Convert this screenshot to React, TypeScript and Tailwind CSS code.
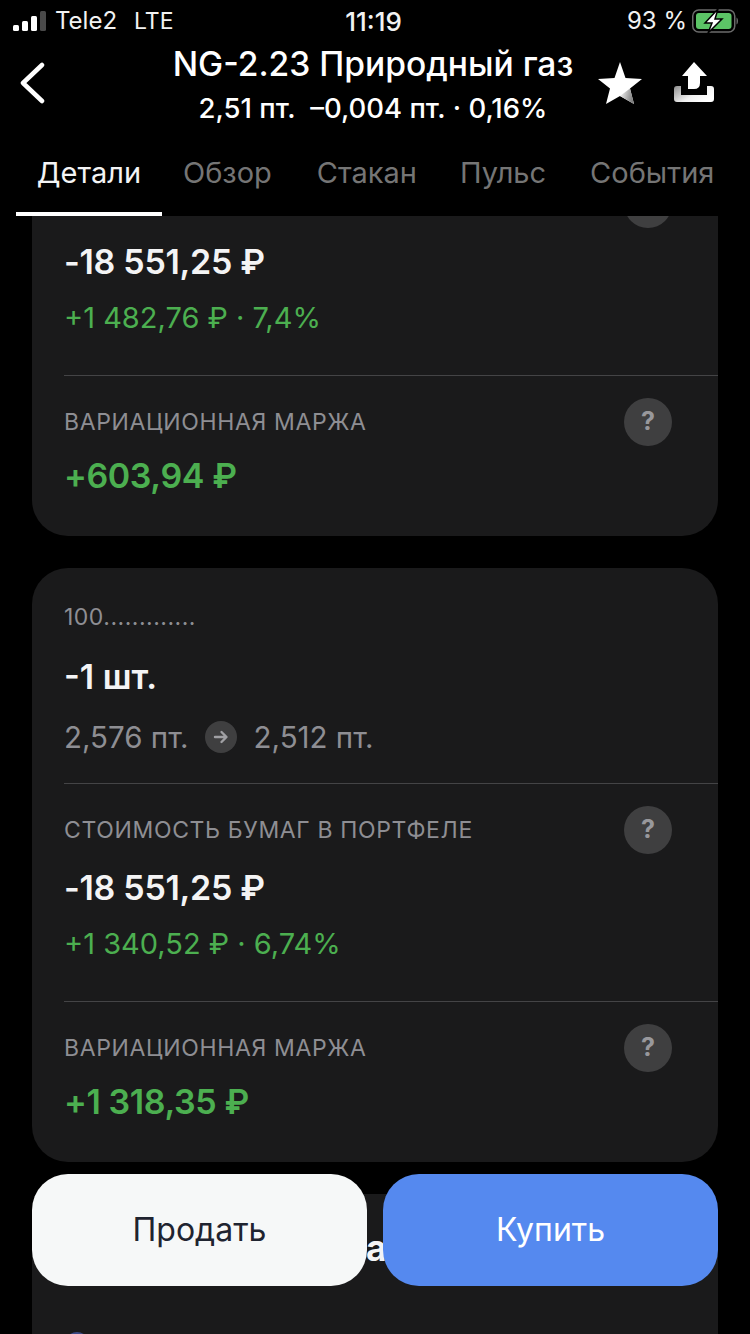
const font = "font-['Inter',sans-serif]";

const Help = ({ mark = true }: { mark?: boolean }) => (
  <div className="flex h-[48px] w-[48px] items-center justify-center rounded-full bg-[#3f3f40] text-[25px] font-bold text-[#98989c]">
    {mark ? "?" : null}
  </div>
);

interface MetricProps {
  label?: string;
  amount: string;
  sub?: string;
  last?: boolean;
}

const Metric = ({ label, amount, sub, last }: MetricProps) => (
  <div className="pl-[32px]">
    <div className={`pt-[22px] ${last ? "pb-[40px]" : "border-b border-[#444446] pb-[39px]"}`}>
      <div className="flex h-[48px] items-center justify-between pr-[46px]">
        <span className="pt-[1px] text-[23px] tracking-[0.65px] text-[#8e8e93]">{label}</span>
        <Help mark={!!label} />
      </div>
      {sub ? (
        <>
          <div className="mt-[14px] h-[40px] text-[34px] leading-[40px] font-semibold tracking-[-0.3px] text-[#f4f4f5]">{amount}</div>
          <div className="mt-[18px] h-[36px] text-[29px] leading-[36px] text-[#4caf50]">{sub}</div>
        </>
      ) : (
        <div className="mt-[10px] h-[40px] text-[34px] leading-[40px] font-semibold tracking-[-0.4px] text-[#4caf50]">{amount}</div>
      )}
    </div>
  </div>
);

const StatusBar = () => (
  <div className="flex h-[42px] items-center justify-between pl-[13px] pr-[12px] text-[24px] text-[#f2f2f2]">
    <div className="flex w-[300px] items-center">
      <svg width="34" height="20" viewBox="0 0 34 20" className="mr-[8px]">
        <rect x="0" y="14" width="6" height="6" rx="1.5" fill="#fff" />
        <rect x="9" y="10" width="6" height="10" rx="1.5" fill="#fff" />
        <rect x="18" y="5" width="6" height="15" rx="1.5" fill="#fff" />
        <rect x="27" y="0" width="6" height="20" rx="1.5" fill="#4a4a4a" />
      </svg>
      <span>Tele2</span>
      <span className="ml-[17px] text-[23px]">LTE</span>
    </div>
    <span className="text-[26px] font-medium -ml-[4px]">11:19</span>
    <div className="flex w-[300px] items-center justify-end">
      <span>93 %</span>
      <svg width="46" height="24" viewBox="0 0 46 24" className="ml-[5px]">
        <rect x="0.750" y="1" width="42" height="22" rx="6" fill="none" stroke="#6b6b6b" strokeWidth="1.5" />
        <rect x="4" y="4" width="35.500" height="16" rx="3" fill="#5cc466" />
        <path d="M44.500 8.500c1 .5 1.500 2 1.500 3.500s-.5 3-1.500 3.500z" fill="#6b6b6b" />
        <path d="M26 0 L13 14 H20 L16 24 L30 10 H23 Z" fill="#fff" stroke="#000" strokeWidth="1.5" />
      </svg>
    </div>
  </div>
);

const Header = () => (
  <div className="shrink-0 bg-black">
    <StatusBar />
    <div className="flex h-[92px] items-start">
      <div className="flex w-[100px] pl-[19px] pt-[20px]">
        <svg width="26" height="42" viewBox="0 0 26 42">
          <path d="M23 3 L4 21 L23 39" fill="none" stroke="#fff" strokeWidth="4.500" strokeLinecap="round" strokeLinejoin="round" />
        </svg>
      </div>
      <div className="flex w-[546px] flex-col items-center text-white">
        <div className="h-[44px] text-[33.600px] leading-[44px] font-medium whitespace-nowrap">NG-2.23 Природный газ</div>
        <div className="text-[27.500px] leading-[44px] font-medium whitespace-nowrap">2,51 пт.&nbsp; –0,004 пт. · 0,16%</div>
      </div>
      <div className="-ml-[49px] flex items-start pt-[19px]">
        <svg width="46" height="44" viewBox="0 0 46 44">
          <defs>
            <linearGradient id="starShade" x1="0" y1="0" x2="1" y2="0.3">
              <stop offset="0" stopColor="#ffffff" />
              <stop offset="1" stopColor="#7f7f7f" />
            </linearGradient>
          </defs>
          <path d="M23 1 L28.500 17 L45 18 L33 27.500 L37 43 L23 35 L9 43 L13 27.500 L1 18 L17.500 17 Z" fill="#fff" />
          <path d="M23 35 L37 43 L33 27.500 Z" fill="url(#starShade)" />
        </svg>
        <svg width="42" height="42" viewBox="0 0 42 42" className="ml-[31px] mt-[1px]">
          <defs>
            <linearGradient id="shareShade" x1="0" y1="0" x2="1" y2="0.6">
              <stop offset="0" stopColor="#8f8f8f" />
              <stop offset="0.6" stopColor="#f0f0f0" />
              <stop offset="1" stopColor="#ffffff" />
            </linearGradient>
          </defs>
          <path d="M0 27 Q0 24 3 24 H7 V33 H33 V24 H37 Q40 24 40 27 V37 Q40 40 37 40 H3 Q0 40 0 37 Z" fill="url(#shareShade)" />
          <path d="M20 0 L33 14 H26 V21 Q26 27 20 27 H14 V14 H8 Z" fill="#fff" />
        </svg>
      </div>
    </div>
    <div className="flex h-[82px] text-[29px] text-[#757575]">
      <div className="ml-[16px] flex h-[82px] w-[146px] items-start justify-center border-b-[4px] border-white pt-[20px] text-[#f4f4f5]">
        <span className="leading-[38px]">Детали</span>
      </div>
      <span className="ml-[21px] pt-[20px] leading-[38px]">Обзор</span>
      <span className="ml-[45px] pt-[20px] leading-[38px]">Стакан</span>
      <span className="ml-[43px] pt-[20px] leading-[38px]">Пульс</span>
      <span className="ml-[44px] pt-[20px] leading-[38px]">События</span>
    </div>
  </div>
);

export default function App() {
  return (
    <div className={`relative flex h-[1334px] w-[750px] flex-col overflow-hidden bg-black ${font}`}>
      <Header />
      <div className="flex-1 overflow-hidden px-[32px]">
        <div className="-mt-[58px] rounded-[36px] bg-[#1a1a1b]">
          <Metric amount="-18 551,25 ₽" sub="+1 482,76 ₽ · 7,4%" />
          <Metric label="ВАРИАЦИОННАЯ МАРЖА" amount="+603,94 ₽" last />
        </div>

        <div className="mt-[32px] rounded-[36px] bg-[#1a1a1b] pt-[36px]">
          <div className="ml-[32px] border-b border-[#444446] pb-[26px]">
            <div className="h-[26px] text-[23px] leading-[26px] tracking-[0.5px] text-[#8e8e93]">100.............</div>
            <div className="mt-[27px] h-[40px] text-[34px] leading-[40px] font-semibold text-[#f4f4f5]">-1 шт.</div>
            <div className="mt-[20px] flex h-[40px] items-center text-[29.500px] text-[#8e8e93]">
              <span>2,576 пт.</span>
              <span className="ml-[16px] mr-[17px] flex h-[32px] w-[32px] items-center justify-center rounded-full bg-[#3f3f40]">
                <svg width="16" height="16" viewBox="0 0 16 16">
                  <path d="M2 8 H13 M8.500 3 L13.500 8 L8.500 13" fill="none" stroke="#a0a0a4" strokeWidth="2.400" strokeLinecap="round" strokeLinejoin="round" />
                </svg>
              </span>
              <span>2,512 пт.</span>
            </div>
          </div>
          <Metric label="СТОИМОСТЬ БУМАГ В ПОРТФЕЛЕ" amount="-18 551,25 ₽" sub="+1 340,52 ₽ · 6,74%" />
          <Metric label="ВАРИАЦИОННАЯ МАРЖА" amount="+1 318,35 ₽" last />
        </div>

        <div className="mt-[32px] h-[200px] rounded-[36px] bg-[#1a1a1b] pt-[29px]">
          <div className="h-[51px] pl-[334px] text-[36px] leading-[51px] font-bold text-[#f4f4f5]">а</div>
          <div className="ml-[33px] mt-[58px] h-[24px] w-[24px] rounded-full bg-[#3c4a86]" />
        </div>
      </div>

      <div className="absolute left-[32px] top-[1174px] flex gap-[16px]">
        <button className="h-[112px] w-[335px] rounded-[36px] bg-[#f6f8f8] text-[32px] text-[#1f2430]">Продать</button>
        <button className="h-[112px] w-[335px] rounded-[36px] bg-[#5589ef] text-[32px] text-white">Купить</button>
      </div>
    </div>
  );
}
